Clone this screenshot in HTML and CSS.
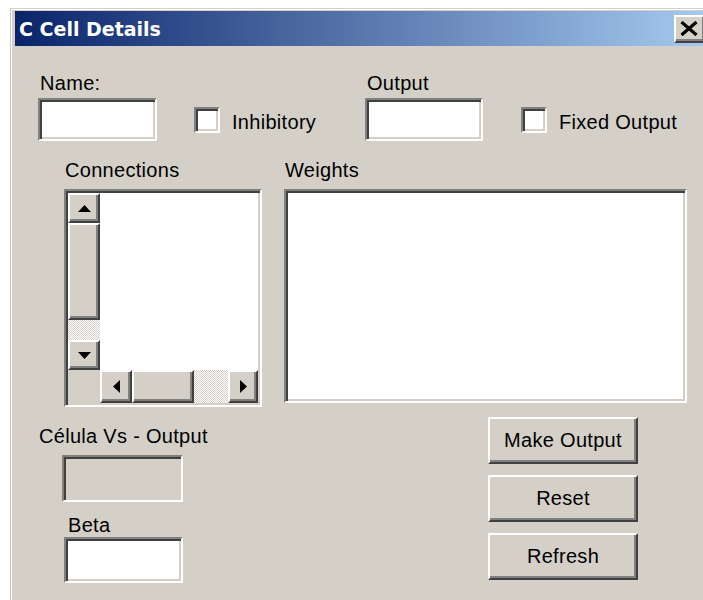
FILE: index.html
```html
<!DOCTYPE html>
<html lang="en">
<head>
<meta charset="utf-8">
<title>C Cell Details</title>
<link rel="stylesheet" href="styles.css">
</head>
<body>
<div class="window">
  <div class="titlebar">
    <span class="title">C Cell Details</span>
    <button class="close raised" aria-label="Close">
      <svg width="20" height="15" viewBox="0 0 20 15"><path d="M2.5 1 L17.5 14 M17.5 1 L2.5 14" stroke="#000" stroke-width="3.2" fill="none"/></svg>
    </button>
  </div>

  <div class="client">
    <div class="row-top">
      <div class="field f-name">
        <div class="lbl">Name:</div>
        <div class="edit sunken"></div>
      </div>
      <div class="check c-inhib">
        <span class="cbox sunken"></span>
        <span class="lbl">Inhibitory</span>
      </div>
      <div class="field f-output">
        <div class="lbl">Output</div>
        <div class="edit sunken"></div>
      </div>
      <div class="check c-fixed">
        <span class="cbox sunken"></span>
        <span class="lbl">Fixed Output</span>
      </div>
    </div>

    <div class="row-lists">
      <div class="group g-conn">
        <div class="lbl">Connections</div>
        <div class="listbox sunken">
          <div class="vscroll">
            <div class="sbtn raised"><svg width="13" height="7" viewBox="0 0 13 7"><path d="M0 7 L6.5 0 L13 7Z"/></svg></div>
            <div class="thumb raised v-thumb"></div>
            <div class="track"></div>
            <div class="sbtn raised"><svg width="13" height="7" viewBox="0 0 13 7"><path d="M0 0 L6.5 7 L13 0Z"/></svg></div>
          </div>
          <div class="list-area"></div>
          <div class="corner"></div>
          <div class="hscroll">
            <div class="sbtn raised h-btn-l"><svg width="7" height="13" viewBox="0 0 7 13"><path d="M7 0 L0 6.5 L7 13Z"/></svg></div>
            <div class="thumb raised h-thumb"></div>
            <div class="track"></div>
            <div class="sbtn raised h-btn-r"><svg width="7" height="13" viewBox="0 0 7 13"><path d="M0 0 L7 6.5 L0 13Z"/></svg></div>
          </div>
        </div>
      </div>
      <div class="group g-weights">
        <div class="lbl">Weights</div>
        <div class="weights sunken"></div>
      </div>
    </div>

    <div class="row-bottom">
      <div class="col-left">
        <div class="lbl">Célula Vs - Output</div>
        <div class="edit sunken edit-disabled"></div>
        <div class="lbl lbl-beta">Beta</div>
        <div class="edit sunken edit-beta"></div>
      </div>
      <div class="col-buttons">
        <button class="btn raised">Make Output</button>
        <button class="btn raised">Reset</button>
        <button class="btn raised">Refresh</button>
      </div>
    </div>
  </div>
</div>
</body>
</html>
```

FILE: styles.css
```css
html, body {
  margin: 0;
  padding: 0;
}

body {
  width: 703px;
  height: 600px;
  overflow: hidden;
  background: #fff;
  font-family: "Liberation Sans", Arial, sans-serif;
  font-size: 20px;
  color: #000;
}

/* dialog frame */
.window {
  margin: 8px 0 0 10px;
  width: 694px;
  min-height: 600px;
  padding: 2px 0 0 4px;
  border-top: 1px solid #d4d0c8;
  border-left: 1px solid #c8c5be;
  box-shadow: inset 1px 1px 0 #fff;
  background: #d4d0c8;
}

.titlebar {
  display: flex;
  align-items: center;
  height: 35px;
  padding: 0 3px 0 4px;
  background: linear-gradient(to right, #0a246a, #a6caf0);
}

.title {
  font-family: "DejaVu Sans", sans-serif;
  font-weight: bold;
  font-size: 19px;
  line-height: 35px;
  padding-top: 1px;
  color: #fff;
  white-space: nowrap;
}

/* 3D bevels */
.sunken {
  box-sizing: border-box;
  border: 2px solid;
  border-color: #808080 #fff #fff #808080;
  box-shadow: inset 2px 2px 0 #404040, inset -2px -2px 0 #d4d0c8;
  background: #fff;
}

.raised {
  box-sizing: border-box;
  border: 2px solid;
  border-color: #fff #404040 #404040 #fff;
  box-shadow: inset -2px -2px 0 #808080;
  background: #d4d0c8;
}

.close {
  margin-left: auto;
  width: 32px;
  height: 28px;
  padding: 0 2px 0 0;
  display: flex;
  align-items: center;
  justify-content: center;
}

.lbl {
  line-height: 23px;
  letter-spacing: 0.3px;
  white-space: nowrap;
}

/* top row: name / output fields */
.row-top {
  display: flex;
  align-items: flex-start;
  padding: 26px 0 0 23px;
}

.field .lbl {
  padding-left: 2px;
}

.edit {
  margin-top: 3px;
  height: 43px;
}

.f-name {
  width: 119px;
}

.f-output {
  width: 118px;
  margin-left: 37px;
}

.check {
  display: flex;
  align-items: flex-start;
  margin-top: 35px;
}

.check .lbl {
  margin: 4px 0 0 12px;
}

.cbox {
  width: 26px;
  height: 26px;
}

.c-inhib {
  width: 134px;
  margin-left: 37px;
}

.c-fixed {
  margin-left: 38px;
}

/* list row */
.row-lists {
  display: flex;
  margin-top: 18px;
  padding-left: 49px;
}

.group .lbl {
  padding-left: 1px;
}

.g-conn {
  width: 198px;
}

.g-weights {
  width: 403px;
  margin-left: 22px;
}

.listbox {
  margin-top: 7px;
  height: 218px;
  padding: 2px;
  display: grid;
  grid-template-columns: 32px 158px;
  grid-template-rows: 177px 33px;
}

.weights {
  margin-top: 7px;
  height: 214px;
}

.vscroll {
  display: flex;
  flex-direction: column;
}

.sbtn {
  display: flex;
  align-items: center;
  justify-content: center;
  height: 30px;
  flex: none;
}

.v-thumb {
  height: 97px;
  flex: none;
}

.track {
  flex: 1;
  background: repeating-conic-gradient(#fff 0 25%, #d4d0c8 0 50%) 0 0 / 2px 2px;
}

.list-area {
  background: #fff;
}

.corner {
  background: #d4d0c8;
}

.hscroll {
  display: flex;
}

.hscroll .sbtn {
  height: auto;
}

.h-btn-l {
  width: 32px;
}

.h-btn-r {
  width: 30px;
}

.h-thumb {
  width: 62px;
  flex: none;
}

/* bottom row */
.row-bottom {
  display: flex;
  margin-top: 10px;
  padding-left: 24px;
}

.col-left {
  width: 449px;
  padding-top: 8px;
  box-sizing: border-box;
  display: flex;
  flex-direction: column;
  align-items: flex-start;
}

.edit-disabled {
  margin: 7px 0 0 23px;
  width: 121px;
  height: 47px;
  background: #d4d0c8;
}

.lbl-beta {
  margin-top: 12px;
  padding-left: 29px;
}

.edit-beta {
  margin: 0 0 0 25px;
  width: 119px;
  height: 46px;
}

.col-buttons {
  display: flex;
  flex-direction: column;
  gap: 11px;
}

.btn {
  width: 150px;
  height: 47px;
  padding: 0;
  font: inherit;
  line-height: 23px;
  letter-spacing: 0.3px;
  color: #000;
}
```
